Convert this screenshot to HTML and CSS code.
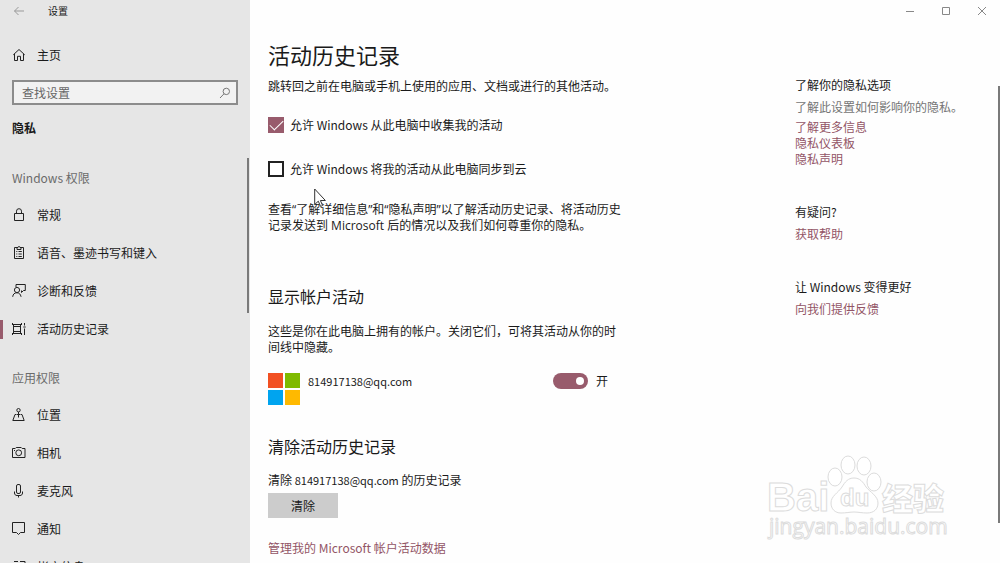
FILE: index.html
```html
<!DOCTYPE html>
<html lang="zh-CN">
<head>
    <meta charset="UTF-8">
    <title>设置</title>
    <link rel="stylesheet" href="styles.css">
</head>
<body>
<div class="window">
    <!-- 左侧导航 -->
    <div class="sidebar">
        <div class="title-bar">
            <button class="back" aria-label="返回">
                <svg width="12" height="10" viewBox="0 0 12 10"><path d="M11 5H1.5M5.5 1L1.5 5l4 4"/></svg>
            </button>
            <span>设置</span>
        </div>
        <a href="#" class="nav-item">
            <svg class="icon" viewBox="0 0 14 14"><path d="M1.3 6.800L7 1.500l5.700 5.300M2.500 6v6.500h3V8.300h3v4.200h3V6"/></svg>
            主页
        </a>
        <div class="search">
            <input type="text" placeholder="查找设置" aria-label="查找设置">
            <svg width="12" height="12" viewBox="0 0 12 12"><circle cx="7.300" cy="4.400" r="3.200"/><path d="M5 6.800L1 11"/></svg>
        </div>
        <h2 class="category">隐私</h2>
        <h3 class="group-title">Windows 权限</h3>
        <div class="nav">
            <a href="#" class="nav-item">
                <svg class="icon" viewBox="0 0 14 14"><path d="M2.500 5.500h9v7h-9zM4.500 5.500V3.200a2.500 2.500 0 0 1 5 0V5.500"/></svg>
                常规
            </a>
            <a href="#" class="nav-item">
                <svg class="icon" viewBox="0 0 14 14"><path d="M5 1.500H2.500v11h9v-11H9M5 3.500V1.500h1a1 1 0 0 1 2 0h1v2zM4.300 5.500h1M4.300 8h1M4.300 10.500h1M6.500 5.500h3.300M6.500 8h3.300M6.500 10.500h3.300"/></svg>
                语音、墨迹书写和键入
            </a>
            <a href="#" class="nav-item">
                <svg class="icon" viewBox="0 0 14 14"><path d="M4 3V.5h9.300v6h-1.800l-2 2v-2M.7 12.800c.3-2.700 1.800-4 4.200-4s3.500 1.300 4.200 4"/><circle cx="5" cy="6" r="2.600"/></svg>
                诊断和反馈
            </a>
            <a href="#" class="nav-item active">
                <svg class="icon" viewBox="0 0 14 14"><path d="M.5 2.500h9M.5 11.500h9M1.500 4.500h7v5h-7zM.5 1v2M9.500 1v2M.5 11v2M9.500 11v2M1.500 2.500v9M8.500 2.500v9M12.500 1v2.500M12.500 6.500V13M11.300 5h2.400"/></svg>
                活动历史记录
            </a>
        </div>
        <h3 class="group-title">应用权限</h3>
        <div class="nav">
            <a href="#" class="nav-item">
                <svg class="icon" viewBox="0 0 14 14"><circle cx="6.500" cy="2.200" r="1.700"/><path d="M6.500 4v5.500M4.500 6.500h4M4 6.500H3L.8 12.500h11.400L10 6.500H9"/></svg>
                位置
            </a>
            <a href="#" class="nav-item">
                <svg class="icon" viewBox="0 0 14 14"><path d="M.5 2.500h2.700l1-1h5l1 1h2.800v9H.5z"/><circle cx="6.700" cy="6.800" r="2.900"/><path d="M2 4.500h1"/></svg>
                相机
            </a>
            <a href="#" class="nav-item">
                <svg class="icon" viewBox="0 0 14 14"><rect x="4.500" y=".5" width="4" height="9" rx="1.500"/><path d="M2.500 7.500v1.500c0 1.500 1 2.500 2.500 2.500h3c1.500 0 2.500-1 2.500-2.500V7.500M6.500 11.500v2"/></svg>
                麦克风
            </a>
            <a href="#" class="nav-item">
                <svg class="icon" viewBox="0 0 14 14"><path d="M.5 .5h12v10H8.500l-2 2-2-2H.5z"/></svg>
                通知
            </a>
            <a href="#" class="nav-item">
                <svg class="icon" viewBox="0 0 14 14"><path d="M2 1.500h4M8 1.500h5v5M1 4h5v8H1zM8 6.500h5V12H8z"/></svg>
                帐户信息
            </a>
        </div>
        <div class="scroll-thumb nav-thumb"></div>
    </div>

    <!-- 右侧内容 -->
    <div class="main">
        <div class="window-buttons">
            <button aria-label="最小化"><svg width="10" height="10" viewBox="0 0 10 10"><path d="M1 5.500h8"/></svg></button>
            <button aria-label="最大化"><svg width="10" height="10" viewBox="0 0 10 10"><path d="M1.500 1.500h7v7h-7z"/></svg></button>
            <button aria-label="关闭"><svg width="10" height="10" viewBox="0 0 10 10"><path d="M1 1l8 8M9 1L1 9"/></svg></button>
        </div>
        <div class="columns">
            <div class="content">
                <h1>活动历史记录</h1>
                <p class="intro">跳转回之前在电脑或手机上使用的应用、文档或进行的其他活动。</p>
                <div class="check-row">
                    <input type="checkbox" id="collect" checked>
                    <label for="collect">允许 Windows 从此电脑中收集我的活动</label>
                </div>
                <div class="check-row">
                    <input type="checkbox" id="sync">
                    <label for="sync">允许 Windows 将我的活动从此电脑同步到云</label>
                </div>
                <p class="more-info">查看“了解详细信息”和“隐私声明”以了解活动历史记录、将活动历史记录发送到 Microsoft 后的情况以及我们如何尊重你的隐私。</p>

                <h2 class="show-title">显示帐户活动</h2>
                <p>这些是你在此电脑上拥有的帐户。关闭它们，可将其活动从你的时间线中隐藏。</p>
                <div class="account">
                    <div class="ms-logo"><i class="red"></i><i class="green"></i><i class="blue"></i><i class="yellow"></i></div>
                    <label class="mail" for="account">814917138@qq.com</label>
                    <input type="checkbox" class="toggle" id="account" checked>
                    <span>开</span>
                </div>

                <h2 class="clear-title">清除活动历史记录</h2>
                <p>清除 <span class="mail">814917138@qq.com</span> 的历史记录</p>
                <button class="clear-button">清除</button>
                <a href="#" class="manage">管理我的 Microsoft 帐户活动数据</a>
            </div>
            <div class="aside">
                <h4>了解你的隐私选项</h4>
                <p class="gray">了解此设置如何影响你的隐私。</p>
                <a href="#">了解更多信息</a>
                <a href="#">隐私仪表板</a>
                <a href="#">隐私声明</a>
                <h4 class="question">有疑问?</h4>
                <a href="#">获取帮助</a>
                <h4 class="better">让 Windows 变得更好</h4>
                <a href="#">向我们提供反馈</a>
            </div>
        </div>
        <div class="scroll-thumb page-thumb"></div>
        <!-- 水印 -->
        <svg class="watermark" width="184" height="90" viewBox="0 0 184 90">
            <ellipse cx="68" cy="22" rx="7" ry="9"/>
            <ellipse cx="81" cy="10" rx="7" ry="9"/>
            <ellipse cx="97" cy="11" rx="7" ry="9"/>
            <ellipse cx="107" cy="27" rx="7" ry="9"/>
            <path d="M87 23c-6 0-9 4-12 9-4 6-11 9-11 16 0 6 4 10 10 10 5 0 9-1 13-1s8 1 13 1c7 0 11-4 11-10 0-7-8-11-12-16-3-5-6-9-12-9z"/>
            <text class="latin" x="0" y="56">Bai</text>
            <text class="du" x="73" y="51">du</text>
            <text class="cjk" x="115" y="55">经验</text>
            <text class="site" x="2" y="79">jingyan.baidu.com</text>
        </svg>
    </div>
    <svg class="cursor" width="14" height="20" viewBox="0 0 14 20"><path d="M.7 1v15.500l3.600-3.300 2.300 5.300 2-1-2.200-5h5z"/></svg>
</div>
</body>
</html>
```
FILE: styles.css
```css
* {
    box-sizing: border-box;
}

body,
h1,
h2,
h3,
h4,
p {
    margin: 0;
}

body {
    font: 12px/16px "Noto Sans CJK SC", sans-serif;
    color: #1a1a1a;
    background: #fefefe;
}

button,
input {
    font: inherit;
    color: inherit;
    margin: 0;
}

button {
    border: 0;
    padding: 0;
    background: none;
}

a {
    color: #935566;
    text-decoration: none;
}

svg {
    fill: none;
    stroke: #222;
    flex: none;
}

.window {
    display: flex;
    height: 100vh;
    position: relative;
    overflow: hidden;
}

/* 左侧 */
.sidebar {
    width: 250px;
    flex: none;
    background: #e6e6e6;
    position: relative;
    overflow: hidden;
}

.title-bar {
    display: flex;
    align-items: center;
    gap: 23px;
    height: 22px;
    padding-left: 13px;
    margin-bottom: 14px;
    font-size: 10px;
}

.back {
    display: flex;
}

.back svg {
    stroke: #999;
}

.nav-item {
    display: flex;
    align-items: center;
    gap: 11px;
    height: 38px;
    padding-left: 12px;
    color: #1a1a1a;
}

.nav-item.active {
    background: linear-gradient(#985b6c, #985b6c) left center / 3px 19px no-repeat;
}

.icon {
    width: 14px;
    height: 14px;
}

.search {
    display: flex;
    align-items: center;
    height: 25px;
    margin: 6px 12px 13px;
    padding: 0 5px 0 8px;
    border: 2px solid #8c8c8c;
    background: #f2f2f2;
}

.search input {
    flex: 1;
    min-width: 0;
    border: 0;
    padding: 0;
    background: none;
    outline: none;
}

.search input::placeholder {
    color: #666;
}

.search svg {
    stroke: #777;
}

.category {
    padding-left: 12px;
    font-size: 12px;
    line-height: 20px;
}

.group-title {
    margin: 20px 0 8px;
    padding-left: 12px;
    font-size: 12px;
    line-height: 20px;
    font-weight: normal;
    color: #6b6b6b;
}

.category + .group-title {
    margin-top: 30px;
}

.scroll-thumb {
    position: absolute;
    width: 2px;
    background: #7a7a7a;
}

.nav-thumb {
    right: 1px;
    top: 158px;
    height: 155px;
}

.page-thumb {
    right: 0;
    top: 86px;
    height: 437px;
}

/* 右侧 */
.main {
    flex: 1;
    position: relative;
}

.window-buttons {
    display: flex;
    justify-content: flex-end;
    height: 22px;
}

.window-buttons button {
    display: flex;
    align-items: center;
    justify-content: center;
    width: 36px;
}

.window-buttons svg {
    stroke: #888;
}

.columns {
    display: flex;
    justify-content: space-between;
    padding: 17px 0 0 18px;
}

.content {
    width: 358px;
}

h1 {
    font-size: 22px;
    line-height: 30px;
    font-weight: normal;
}

.content h2 {
    font-size: 16px;
    line-height: 22px;
    font-weight: normal;
    margin-bottom: 16px;
}

.intro {
    margin: 9px 0 23px;
    white-space: nowrap;
}

.check-row {
    display: flex;
    align-items: center;
    gap: 6px;
    height: 16px;
    margin-bottom: 28px;
}

.check-row + .more-info {
    margin-top: -3px;
}

/* 弯引号用西文字体，避免占满一个汉字宽 */
.more-info {
    font-family: "Open Sans", "Noto Sans CJK SC", sans-serif;
}

.check-row input {
    appearance: none;
    width: 16px;
    height: 16px;
    border: 2px solid #222;
    background: #fff;
}

.check-row input:checked {
    display: grid;
    place-items: center;
    border: 0;
    background: #985b6c;
}

.check-row input:checked::after {
    content: "";
    width: 12px;
    height: 6px;
    border: solid #fff;
    border-width: 0 0 1px 1px;
    transform: translateY(-2px) rotate(-45deg);
}

.content .show-title {
    margin-top: 51px;
}

.account {
    display: flex;
    gap: 8px;
    margin-top: 18px;
    width: 340px;
}

.ms-logo {
    display: grid;
    grid-template-columns: 15px 15px;
    grid-auto-rows: 15px;
    gap: 2px;
}

.red {
    background: #f25022;
}

.green {
    background: #7fba00;
}

.blue {
    background: #00a4ef;
}

.yellow {
    background: #ffb900;
}

.mail {
    font-size: 11px;
}

.account .mail {
    flex: 1;
}

.toggle {
    appearance: none;
    display: flex;
    align-items: center;
    justify-content: flex-end;
    width: 35px;
    height: 16px;
    padding-right: 4px;
    border-radius: 8px;
    background: #985b6c;
}

.toggle::after {
    content: "";
    width: 8px;
    height: 8px;
    border-radius: 4px;
    background: #fff;
}

.content .clear-title {
    margin-top: 30px;
    margin-bottom: 15px;
}

.clear-button {
    display: block;
    width: 70px;
    height: 25px;
    margin: 5px 0 22px;
    background: #ccc;
}

.aside {
    width: 205px;
    padding-top: 38px;
}

.aside h4 {
    margin-bottom: 6px;
    font-size: 12px;
    font-weight: normal;
}

.aside a {
    display: block;
}

.gray {
    margin-bottom: 4px;
    color: #757575;
}

.aside .question,
.aside .better {
    margin-top: 37px;
}

/* 覆盖在页面上的水印和鼠标 */
.watermark {
    position: absolute;
    right: 49px;
    bottom: 18px;
    overflow: visible;
    fill: #fff;
    stroke: #dcdcdc;
    pointer-events: none;
}

.watermark text {
    font-family: "Liberation Sans", "Noto Sans CJK SC", sans-serif;
    font-weight: bold;
}

.watermark .latin {
    font-size: 40px;
}

.watermark .du {
    font-size: 24px;
}

.watermark .cjk {
    font-size: 31px;
    font-weight: 900;
}

.watermark .site {
    font-family: "Open Sans", sans-serif;
    font-size: 21px;
    font-weight: normal;
}

.cursor {
    position: absolute;
    left: 314px;
    top: 188px;
    fill: #fff;
    stroke: #333;
    pointer-events: none;
}
```
